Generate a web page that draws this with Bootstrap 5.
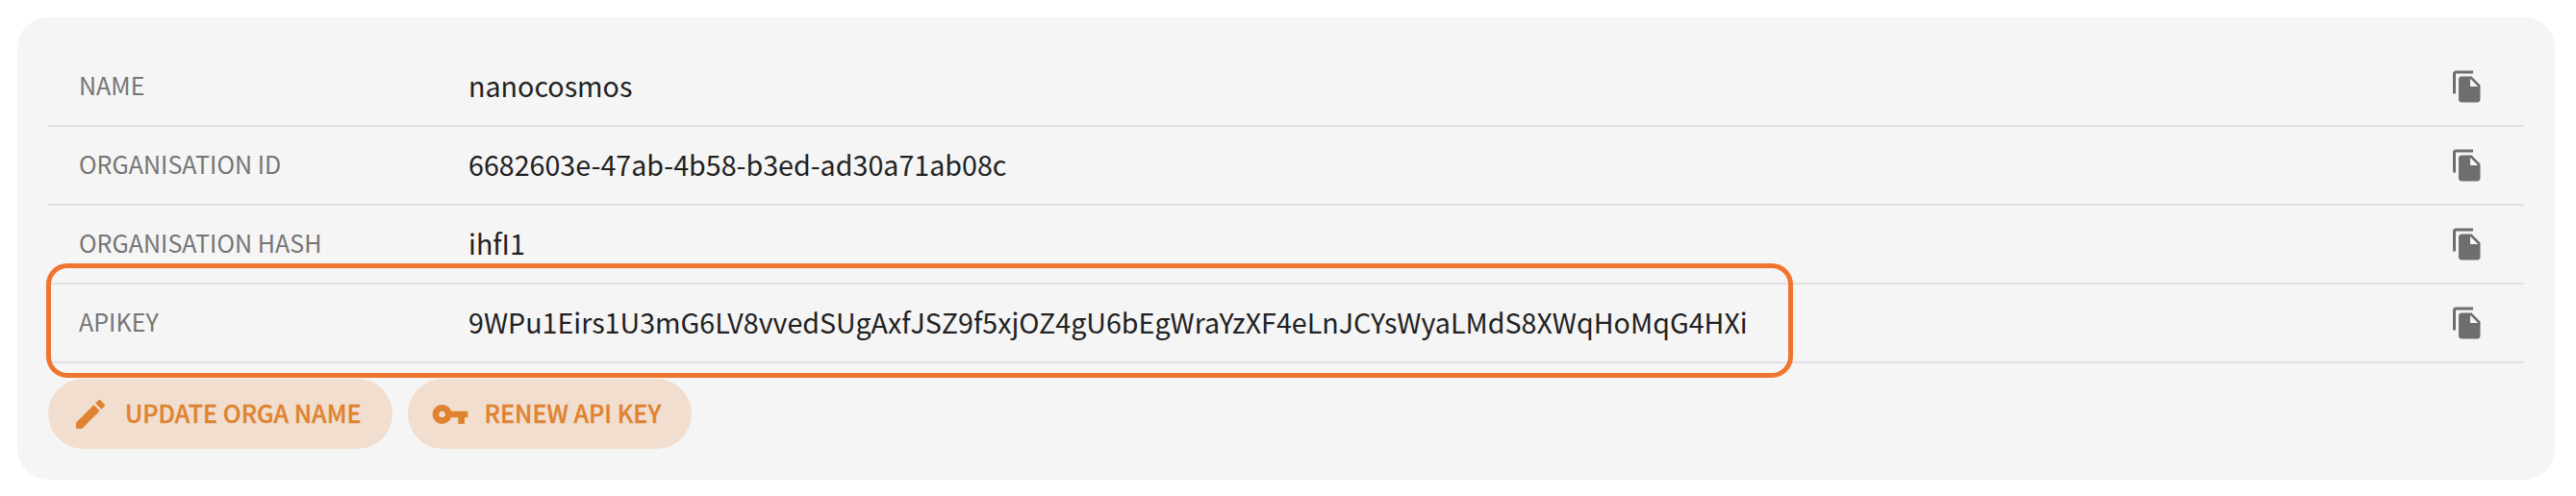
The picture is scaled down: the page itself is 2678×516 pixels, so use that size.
<!DOCTYPE html>
<html lang="en">
<head>
<meta charset="utf-8">
<title>Organisation</title>
<link href="https://cdn.jsdelivr.net/npm/bootstrap@5.3.0/dist/css/bootstrap.min.css" rel="stylesheet">
<style>
  body { background: #fff; font-family: "Source Sans Pro", "Noto Sans CJK SC", sans-serif; color: #212121; }
  .org-panel { margin: 18px 22px 0 18px; height: 481px; padding: 32px; background: #f5f5f5; border-radius: 32px; }
  .org-row { height: 82px; border-bottom: 2px solid #e0e0e0; padding: 0 41px 0 32px; }
  .org-label { width: 405px; padding-bottom: 4px; font-size: 25.07px; line-height: 36px; color: #757575; }
  .org-value { padding-bottom: 3px; font-size: 28.65px; line-height: 40px; }
  .copy-btn { color: #6e6e6e; line-height: 0; }
  .key-frame { position: absolute; left: -2px; top: -22px; width: 1816px; height: 119px; border: 5px solid #f0742e; border-radius: 22px; pointer-events: none; }
  .org-actions { margin-top: 16px; gap: 16px; }
  .pill-btn { height: 73px; padding: 0 32px 0 24px; gap: 16px; border: 0; background: #f1decf; color: #e08330; font-size: 25.07px; font-weight: 500; line-height: 36px; -webkit-text-stroke: .35px #e08330; }
  .pill-btn span { padding-bottom: 3px; }
</style>
</head>
<body>
<svg class="d-none">
  <symbol id="i-copy" viewBox="0 0 24 24"><path fill="currentColor" d="M16 1H4c-1.1 0-2 .9-2 2v14h2V3h12V1zm-1 4l6 6v10c0 1.1-.9 2-2 2H7.99C6.89 23 6 22.1 6 21l.01-14c0-1.1.89-2 1.99-2h7zm-1 7h5.5L14 6.5V12z"/></symbol>
</svg>
<main class="org-panel">
  <div class="org-row d-flex align-items-center">
    <div class="org-label"><span>NAME</span></div>
    <div class="org-value flex-grow-1"><span>nanocosmos</span></div>
    <button class="copy-btn btn p-0 border-0" aria-label="Copy"><svg width="36" height="36"><use href="#i-copy"/></svg></button>
  </div>
  <div class="org-row d-flex align-items-center">
    <div class="org-label"><span>ORGANISATION ID</span></div>
    <div class="org-value flex-grow-1"><span>6682603e-47ab-4b58-b3ed-ad30a71ab08c</span></div>
    <button class="copy-btn btn p-0 border-0" aria-label="Copy"><svg width="36" height="36"><use href="#i-copy"/></svg></button>
  </div>
  <div class="org-row d-flex align-items-center">
    <div class="org-label"><span>ORGANISATION HASH</span></div>
    <div class="org-value flex-grow-1"><span>ihfI1</span></div>
    <button class="copy-btn btn p-0 border-0" aria-label="Copy"><svg width="36" height="36"><use href="#i-copy"/></svg></button>
  </div>
  <div class="org-row d-flex align-items-center position-relative">
    <div class="org-label"><span>APIKEY</span></div>
    <div class="org-value flex-grow-1"><span>9WPu1Eirs1U3mG6LV8vvedSUgAxfJSZ9f5xjOZ4gU6bEgWraYzXF4eLnJCYsWyaLMdS8XWqHoMqG4HXi</span></div>
    <button class="copy-btn btn p-0 border-0" aria-label="Copy"><svg width="36" height="36"><use href="#i-copy"/></svg></button>
    <div class="key-frame"></div>
  </div>
  <div class="org-actions d-flex">
    <button class="pill-btn btn rounded-pill d-flex align-items-center">
      <svg width="40" height="40" viewBox="0 0 24 24" fill="currentColor"><path d="M3 17.25V21h3.75L17.81 9.94l-3.75-3.75L3 17.25zM20.71 7.04c.39-.39.39-1.02 0-1.41l-2.34-2.34c-.39-.39-1.02-.39-1.41 0l-1.83 1.83 3.75 3.75 1.83-1.83z"/></svg>
      <span>UPDATE ORGA NAME</span>
    </button>
    <button class="pill-btn btn rounded-pill d-flex align-items-center">
      <svg width="40" height="40" viewBox="0 0 24 24" fill="currentColor"><path d="M12.65 10C11.83 7.67 9.61 6 7 6c-3.31 0-6 2.69-6 6s2.69 6 6 6c2.61 0 4.83-1.67 5.65-4H17v4h4v-4h2v-4H12.65zM7 14c-1.1 0-2-.9-2-2s.9-2 2-2 2 .9 2 2-.9 2-2 2z"/></svg>
      <span>RENEW API KEY</span>
    </button>
  </div>
</main>
<script src="https://cdn.jsdelivr.net/npm/bootstrap@5.3.0/dist/js/bootstrap.bundle.min.js"></script>
</body>
</html>
